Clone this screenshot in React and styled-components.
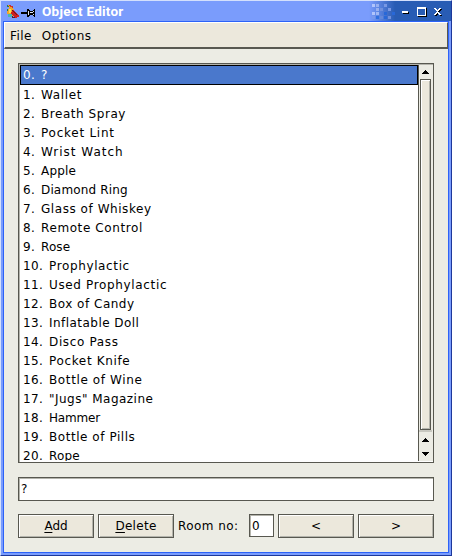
import React from "react";
import styled, { createGlobalStyle } from "styled-components";

const Global = createGlobalStyle`
  *{box-sizing:border-box}
  body{margin:0;overflow:hidden;font:12px/19px "DejaVu Sans",sans-serif;color:#000}
`;
const Window = styled.main`
  width:452px;height:556px;display:flex;flex-direction:column;background:#7a9cfc;
  border:1px solid #1d389b;border-left-color:#d4e0fc;border-top-color:#d4e0fc;padding:0 2px 2px;
`;
const TitleBar = styled.header`
  height:20px;flex:none;display:flex;align-items:center;margin-right:-2px;
  background:linear-gradient(90deg,#7a9cfc 0 366px,#285cb4 392px);
`;
const Icon = styled.svg`display:block;flex:none;shape-rendering:crispEdges;`;
const Title = styled.h1`
  margin:0 0 0 6px;flex:1;font:bold 13.5px/20px Roboto,sans-serif;color:#fff;letter-spacing:${p => p.$ls}px;white-space:nowrap;
`;
const Client = styled.section`
  flex:1;min-height:0;display:flex;flex-direction:column;border:1px solid #2c62f8;background:#ecece4;
`;
const MenuBar = styled.nav`
  height:27px;flex:none;display:flex;gap:10px;padding:4px 0 0 5px;background:#ece8dc;
  border:solid;border-width:1px 1px 2px 1px;border-color:#fff #585850 #585850 #fff;
`;
const Label = styled.span`letter-spacing:${p => p.$ls || 0}px;white-space:pre;`;
const Body = styled.div`flex:1;display:flex;flex-direction:column;padding:14px 14px 0;`;
const ListFrame = styled.div`
  height:400px;flex:none;display:flex;border:1px solid #585850;box-shadow:inset 1px 1px #b4b4ac;padding:1px 0 1px 1px;background:#fff;
`;
const List = styled.ul`width:398px;height:396px;flex:none;margin:0;padding:0;list-style:none;overflow:hidden;`;
const Row = styled.li`
  height:${p => p.$selected ? 20 : 19}px;display:flex;padding-left:3px;line-height:21px;white-space:pre;
  ${p => p.$selected && "background:#4a78cc;color:#fff;box-shadow:inset 0 0 0 1px #000;"}
`;
const Number = styled.span`width:${p => p.$wide ? 26 : 18}px;letter-spacing:.37px;`;
const Scroll = styled.div`
  width:15px;height:396px;display:flex;flex:none;flex-direction:column;border-left:1px solid #585850;background:#ecece4;
`;
const Thumb = styled.div`
  width:11px;height:351px;flex:none;margin-left:1px;border:1px solid #585850;background:#ece8dc;box-shadow:inset 1px 1px #fff,inset -1px -1px #b4b4ac;
`;
const ScrollEnd = styled.div`width:13px;height:31px;border-top:2px solid #c8c8c0;`;
const Field = styled.input`
  width:${p => p.$w}px;height:23px;flex:none;margin:0;padding:0 0 0 2px;outline:0;border-radius:0;
  border:1px solid #585850;background:#fff;box-shadow:inset 1px 1px #b4b4ac;font:12px "DejaVu Sans",sans-serif;color:#000;
`;
const NameField = styled(Field)`margin-top:14px;height:24px;`;
const Actions = styled.div`height:24px;display:flex;gap:4px;margin-top:13px;`;
const Button = styled.button`
  width:76px;height:24px;flex:none;padding:0;border:1px solid #585850;border-radius:0;background:#ece8dc;color:#000;
  box-shadow:inset 1px 1px #fff,inset -1px -1px #b4b4ac;
  font:12px/22px "DejaVu Sans",sans-serif;letter-spacing:${p => p.$ls || 0}px;u{text-underline-offset:2px;text-decoration-thickness:1px}
`;
const RoomLabel = styled.label`width:67px;line-height:24px;letter-spacing:.45px;white-space:nowrap;margin-right:4px;`;

const items = [
  ["?", 0], ["Wallet", .65], ["Breath Spray", .55], ["Pocket Lint", .75], ["Wrist Watch", 1], ["Apple", .2],
  ["Diamond Ring", .15], ["Glass of Whiskey", .55], ["Remote Control", .6], ["Rose", .1], ["Prophylactic", .63],
  ["Used Prophylactic", .65], ["Box of Candy", .5], ["Inflatable Doll", .46], ["Disco Pass", .65], ["Pocket Knife", .65],
  ["Bottle of Wine", .62], ['"Jugs" Magazine', .48], ["Hammer", -.2], ["Bottle of Pills", .55], ["Rope", .2],
];
const dots = [
  [0,0,"#b0c4fc"],[4,0,"#98b0f0"],[12,0,"#7898e4"],[4,4,"#98b0f0"],[8,4,"#7090dc"],[16,4,"#7898e4"],
  [0,8,"#b0c4fc"],[4,8,"#a0b8f4"],[12,8,"#2868d8"],[20,8,"#2868d8"],
  [4,12,"#3070e0"],[8,12,"#6488d8"],[16,12,"#7090dc"],[0,12,"#7898ec"],[12,12,"#2868d8"],
];
const Arrow = ({ down }) => <path d={down ? "M0 0h7v1h-1v1h-1v1h-1v1h-1v-1h-1v-1h-1v-1h-1z" : "M3 0h1v1h1v1h1v1h1v1h-7v-1h1v-1h1v-1h1z"} />;

export default function App() {
  return <>
    <Global />
    <Window>
      <TitleBar>
        <Icon width="33" height="20">
          <path d="M5 4h3v1h2v3h1v2h-1v6h-5v-3h-1v-3h1v-2h1v-2h-1z" fill="#f0a428" />
          <path d="M6 4h2v1h2v2h-1v-1h-2v-1h-1z" fill="#c83030" />
          <path d="M4 4h1v1h1v1h-2zM4 8h1v2h-1z" fill="#287850" />
          <path d="M6 8h2v4h-2z" fill="#f8e050" />
          <path d="M5 13h4v3h-4z" fill="#48b8b0" />
          <path d="M9 9h2v1h1v1h1v1h1v1h1v1h1v2h-2v1h-2v-1h-1v-1h-1v-1h-1v-1h-1v-2h1z" fill="#d02020" />
          <path d="M9 9h1v1h1v1h1v1h1v1h1v1h-1v-1h-1v-1h-1v-1h-1v-1h-1zM9 15h1v1h2v1h-3z" fill="#581830" />
          <path d="M18 11h6v2h-6zM24 8h2v1h1v1h3v-1h1v-1h1v8h-1v-1h-1v-1h-3v1h-1v1h-2z" fill="#000" />
          <path d="M25 10h1v4h-1zM27 11h3v1h-3zM30 10h1v1h-1zM30 13h1v1h-1z" fill="#e0e4f0" />
        </Icon>
        <Title $ls={.25}>Object Editor</Title>
        <Icon width="80" height="20">
          {dots.map(([x, y, c]) => <rect key={`${x}-${y}`} x={x + 1} y={y + 3} width="3" height="3" fill={c} />)}
          <path d="M32 11h6v2h-6zM47 7h9v9h-9zM64 8h2v1h1v1h1v-1h1v-1h2v1h-1v1h-1v1h-1v1h1v1h1v1h1v1h-2v-1h-1v-1h-1v1h-1v1h-2v-1h1v-1h1v-1h1v-1h-1v-1h-1v-1h-1z" fill="#000" />
          <path d="M47 8h7v6h-7z" fill="#285cb4" />
          <g fill="#fff"><path d="M31 10h6v2h-6z" /><path fillRule="evenodd" d="M46 6h9v9h-9zM47 8v6h7v-6z" /><path d="M63 7h2v1h1v1h1v-1h1v-1h2v1h-1v1h-1v1h-1v1h1v1h1v1h1v1h-2v-1h-1v-1h-1v1h-1v1h-2v-1h1v-1h1v-1h1v-1h-1v-1h-1v-1h-1z" /></g>
        </Icon>
      </TitleBar>
      <Client>
        <MenuBar><Label $ls={.4}>File</Label><Label $ls={.5}>Options</Label></MenuBar>
        <Body>
          <ListFrame>
            <List>{items.map(([name, ls], i) => <Row key={name} $selected={i === 0}><Number $wide={i > 9}>{i}.</Number><Label $ls={ls}>{name}</Label></Row>)}</List>
            <Scroll>
              <Icon width="14" height="14"><g transform="translate(3 5)"><Arrow /></g></Icon>
              <Thumb />
              <ScrollEnd><Icon width="13" height="29"><g transform="translate(3 6)"><Arrow /></g><g transform="translate(3 20)"><Arrow down /></g></Icon></ScrollEnd>
            </Scroll>
          </ListFrame>
          <NameField $w={416} defaultValue="?" aria-label="Object name" />
          <Actions>
            <Button><u>A</u>dd</Button><Button $ls={.3}><u>D</u>elete</Button>
            <RoomLabel>Room no:</RoomLabel>
            <Field $w={25} defaultValue="0" aria-label="Room number" />
            <Button>&lt;</Button><Button>&gt;</Button>
          </Actions>
        </Body>
      </Client>
    </Window>
  </>;
}
